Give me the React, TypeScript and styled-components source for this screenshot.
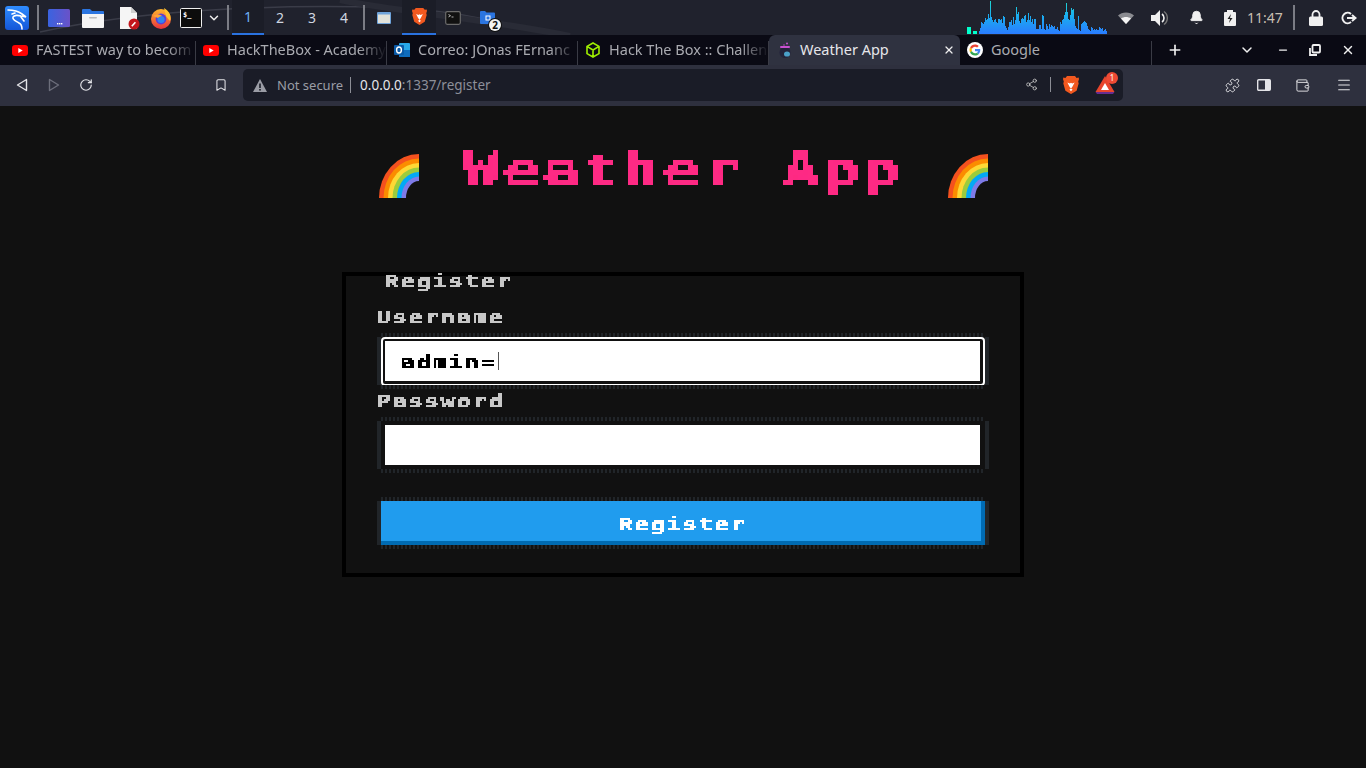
import React from "react";
import styled, { createGlobalStyle, css } from "styled-components";
import { Bell, Bookmark, ChevronDown, Menu, Minus, Plus, Puzzle, RotateCw, Share2, Wallet, X } from "lucide-react";

const Global = createGlobalStyle`
  html, body { margin: 0; padding: 0; height: 100%; background: #111; overflow: hidden; }
  * { box-sizing: border-box; }
`;

const Shell = styled.div`
  width: 1366px; height: 768px; display: flex; flex-direction: column; overflow: hidden;
  font-family: "Noto Sans", sans-serif;
`;

/* ---------- desktop panel ---------- */
const Panel = styled.header`
  position: relative; height: 35px; flex: none; display: flex; align-items: center;
  background: #20222d; padding-left: 3px; color: #d8d8d8; overflow: hidden;
`;
const Swoosh = styled.svg`position: absolute; left: 0; top: 0; pointer-events: none;`;
const PanelGroup = styled.div`position: relative; display: flex; align-items: center; height: 35px;`;
const PanelSep = styled.div<{ $l?: number; $r?: number }>`
  position: relative; width: 2px; height: 25px; background: #7b7d85; flex: none;
  margin: 0 ${(p) => p.$r ?? 0}px 0 ${(p) => p.$l ?? 0}px;
`;
const Launcher = styled.div<{ $w: number }>`
  width: ${(p) => p.$w}px; height: 35px; display: flex; align-items: center; justify-content: center; flex: none;
`;
const Workspace = styled.div<{ $on?: boolean }>`
  width: 32px; height: 35px; display: flex; align-items: center; justify-content: center; flex: none;
  font-size: 14px; color: ${(p) => (p.$on ? "#6fb0f5" : "#cfd6e0")};
  ${(p) => p.$on && css`background: #1b1d27; border-bottom: 2px solid #2a72e0;`}
`;
const TaskItem = styled.div<{ $w: number; $on?: boolean }>`
  position: relative; width: ${(p) => p.$w}px; height: 35px; display: flex; align-items: center; justify-content: center; flex: none;
  ${(p) => p.$on && css`background: #1b1d27; border-bottom: 2px solid #2a72e0;`}
`;
const Badge = styled.span`
  position: absolute; left: 19px; top: 19px; width: 12px; height: 12px; border-radius: 50%;
  background: #f2f2f2; color: #111; font-size: 10px; font-weight: 700; line-height: 12px; text-align: center;
  box-shadow: 0 0 0 1px #111;
`;
const Tray = styled.div`
  position: relative; margin-left: auto; display: flex; align-items: center; height: 35px; padding-right: 4px;
`;
const Visual = styled.svg`display: block; margin-right: 4px;`;
const TrayIcon = styled.div<{ $w: number }>`
  width: ${(p) => p.$w}px; display: flex; align-items: center; justify-content: center; flex: none; color: #ececec;
`;
const Clock = styled.span`font-size: 14px; color: #c9bfb0; width: 34px; text-align: center; flex: none; white-space: nowrap;`;

/* ---------- tab strip ---------- */
const Strip = styled.div`
  height: 30px; flex: none; display: flex; align-items: stretch; background: #0a0a14; padding-left: 5px; color: #a9aab0;
`;
const Tab = styled.div<{ $active?: boolean; $sep?: boolean }>`
  position: relative; width: 191px; flex: none; display: flex; align-items: center; gap: 8px; padding-left: 7px;
  font-size: 14.5px; white-space: nowrap; overflow: hidden;
  ${(p) => p.$sep && css`&::before { content: ""; position: absolute; right: 0; top: 6px; bottom: 0; width: 1px; background: #3a3b45; }`}
  ${(p) => p.$active && css`background: #2f3240; color: #e6e6ea; border-radius: 6px 6px 0 0; padding-left: 9px;`}
`;
const TabTitle = styled.span<{ $fade?: boolean }>`
  flex: 1; min-width: 0; line-height: 28px; margin-top: -2px;
  ${(p) => p.$fade && css`-webkit-mask-image: linear-gradient(to right, #000 82%, transparent 100%);`}
`;
const TabClose = styled.span`display: flex; color: #f0f0f0; margin-right: 5px;`;
const StripRule = styled.div`width: 1px; margin: 6px 0 0 0; background: #3a3b45; flex: none;`;
const StripBtn = styled.div<{ $w: number; $ml?: number }>`
  width: ${(p) => p.$w}px; margin-left: ${(p) => p.$ml ?? 0}px; display: flex; align-items: center; justify-content: center; color: #f0f0f0; flex: none;
`;

/* ---------- toolbar ---------- */
const Toolbar = styled.div`
  height: 41px; flex: none; display: flex; align-items: center; background: #2e303e; padding: 0 0 1px 6px;
  color: #e4e4e8;
`;
const ToolBtn = styled.div<{ $w: number; $dim?: boolean; $ml?: number }>`
  width: ${(p) => p.$w}px; margin-left: ${(p) => p.$ml ?? 0}px; display: flex; align-items: center; justify-content: center; flex: none;
  color: ${(p) => (p.$dim ? "#6c6e7b" : "#e4e4e8")};
`;
const BookmarkSlot = styled.div`
  width: 141px; padding-right: 15px; display: flex; justify-content: flex-end; flex: none; color: #e4e4e8;
`;
const Omnibox = styled.div`
  width: 880px; height: 32px; flex: none; background: #1a1c27; border-radius: 5px; display: flex; align-items: center;
  padding: 0 8px 0 10px; font-size: 13px; color: #8d8f99;
`;
const Warn = styled.div`display: flex; margin-right: 10px;`;
const Notsecure = styled.span`color: #9a9ca5; font-size: 13px;`;
const OmniRule = styled.div<{ $h?: number; $l?: number; $r?: number }>`
  width: 1px; height: ${(p) => p.$h ?? 16}px; background: #8c8e96; flex: none;
  margin: 0 ${(p) => p.$r ?? 9}px 0 ${(p) => p.$l ?? 7}px;
`;
const Host = styled.span`color: #e6e6ea; font-size: 13.5px;`;
const Path = styled.span`color: #8d8f99; font-size: 13.5px;`;
const OmniTail = styled.div`margin-left: auto; display: flex; align-items: center;`;
const RatWrap = styled.div`position: relative; width: 20px; height: 18px; margin-left: 16px;`;
const RatBadge = styled.span`
  position: absolute; left: 11px; top: -4px; width: 12px; height: 12px; border-radius: 50%;
  background: #ee4a34; color: #fff; font-size: 8px; line-height: 12px; text-align: center;
`;

/* ---------- page ---------- */
const Page = styled.main`
  flex: 1; background: #111; display: flex; flex-direction: column; align-items: center; padding-top: 39px;
`;
const Heading = styled.h1`
  margin: 0; height: 55px; display: flex; align-items: flex-start; font-weight: 400; color: #fe2a84;
`;
const Rainbow = styled.svg`display: block; flex: none; margin-top: 8px;`;
const TitleText = styled.div`margin: 5px 44px 0 44px; flex: none;`;

const Cell = styled.span<{ $n: number; $size: number; $filter: string }>`
  display: inline-block; flex: none; width: ${(p) => p.$n * p.$size}px; height: ${(p) => p.$size + 2}px;
  filter: url(#${(p) => p.$filter}); line-height: ${(p) => p.$size}px; white-space: pre; text-align: left;
`;
const Glyphs = styled.span<{ $size: number }>`
  display: inline-block; transform: scaleX(1.3); transform-origin: 0 0;
  font-family: "DejaVu Sans Mono", monospace; font-weight: 700;
  font-size: ${(p) => p.$size * 1.15}px; letter-spacing: ${(p) => p.$size * 0.0767}px;
  -webkit-text-stroke: ${(p) => p.$size * 0.012}px currentColor;
`;
const PixelText: React.FC<{ text: string; size: number; filter: string }> = ({ text, size, filter }) => (
  <Cell $n={text.length} $size={size} $filter={filter}>
    <Glyphs $size={size}>{text}</Glyphs>
  </Cell>
);

const Form = styled.form`
  position: relative; width: 682px; height: 305px; margin-top: 72px; border: 4px solid #000; background: #111;
  padding: 31px 0 0 31px; color: #c8c8c8;
`;
const Legend = styled.div`
  position: absolute; left: 38px; top: -6px; height: 18px; color: #c8c8c8;
`;
const Field = styled.div`display: flex; flex-direction: column;`;
const Label = styled.label`display: block; height: 25px; margin: -1px 0 2px -1px; color: #c8c8c8;`;

const Frame = styled.div<{ $h?: number }>`
  position: relative; width: 612px; height: ${(p) => p.$h ?? 56}px;
  &::before {
    content: ""; position: absolute; left: 4px; right: 4px; top: 0; height: 4px;
    background: repeating-linear-gradient(90deg, #212529 0 2px, #111 2px 4px);
  }
  &::after {
    content: ""; position: absolute; left: 4px; right: 4px; bottom: 0; height: 4px;
    background: repeating-linear-gradient(90deg, #212529 0 2px, #111 2px 4px);
    box-shadow: 0 3px 0 -2px #1b1d20;
  }
`;
const SideBar = styled.i<{ $right?: boolean }>`
  position: absolute; top: 4px; bottom: 4px; width: 4px; background: #212529;
  ${(p) => (p.$right ? "right: 0;" : "left: 0;")}
`;
const Focus = styled.div`
  position: absolute; left: 4px; right: 4px; top: 4px; bottom: 3px; border: 2px solid #fff; border-radius: 4px; background: #111;
  padding: 2px 3px 3px 2px;
`;
const Plain = styled.div`
  position: absolute; left: 4px; right: 4px; top: 4px; bottom: 4px; background: #111; padding: 4px 5px 4px 4px;
`;
const InputBox = styled.div`
  width: 100%; height: 100%; background: #fff; color: #000; display: flex; align-items: center; padding: 3px 0 0 15px;
`;
const Caret = styled.i`display: block; width: 1px; height: 18px; background: #555; margin: -3px 0 0 2px;`;
const Button = styled.button`
  position: absolute; left: 4px; right: 4px; top: 4px; bottom: 4px; border: 0; padding: 3px 3px 0 0; margin: 0;
  background: #209cee; color: #fff; box-shadow: inset -4px -4px #006bb3;
  display: flex; align-items: center; justify-content: center;
`;
const Spacer = styled.div<{ $h: number }>`height: ${(p) => p.$h}px;`;

/* ---------- drawings ---------- */
const KaliIcon = () => (
  <svg width="26" height="26" viewBox="0 0 26 26">
    <defs>
      <linearGradient id="kb" x1="0" y1="0" x2="0" y2="1"><stop offset="0" stopColor="#2f8cff" /><stop offset="1" stopColor="#1456d8" /></linearGradient>
    </defs>
    <rect x="1" y="1" width="24" height="24" rx="3" fill="url(#kb)" />
    <path d="M4 5c5 0 10 1 14 4l4 3-5-1c-3-1-7-1-8 1-1 3 3 4 6 6 2 1 3 3 3 6M11 8l-3 1M17 12l3 4" fill="none" stroke="#fff" strokeWidth="1.6" strokeLinecap="round" />
  </svg>
);
const DesktopIcon = () => (
  <svg width="22" height="18" viewBox="0 0 22 18">
    <defs><linearGradient id="dg" x1="0" y1="0" x2="1" y2="0"><stop offset="0" stopColor="#3a63e0" /><stop offset="1" stopColor="#6a52c8" /></linearGradient></defs>
    <rect width="22" height="18" rx="1.5" fill="url(#dg)" />
    <rect x="9" y="14" width="1.4" height="1.4" fill="#fff" /><rect x="11" y="14" width="1.4" height="1.4" fill="#fff" /><rect x="13" y="14" width="1.4" height="1.4" fill="#fff" />
  </svg>
);
const FilesIcon = () => (
  <svg width="22" height="20" viewBox="0 0 22 20">
    <path d="M0 2a1 1 0 0 1 1-1h7l2 2h11a1 1 0 0 1 1 1v3H0z" fill="#2b75e0" />
    <path d="M0 6h22v13a1 1 0 0 1-1 1H1a1 1 0 0 1-1-1z" fill="#f4f4f4" />
    <rect x="7" y="9" width="8" height="1.6" rx=".8" fill="#bcbcbc" />
  </svg>
);
const NoteIcon = () => (
  <svg width="22" height="24" viewBox="0 0 22 24">
    <path d="M2 1h11l6 6v16H2z" fill="#f5f5f5" /><path d="M13 1l6 6h-6z" fill="#cfcfcf" />
    <circle cx="16" cy="18" r="5.5" fill="#c4161c" /><path d="M13.8 20.2l3.6-4" stroke="#fff" strokeWidth="1.6" />
  </svg>
);
const FoxIcon = () => (
  <svg width="22" height="22" viewBox="0 0 22 22">
    <defs><linearGradient id="ff" x1="0" y1="0" x2="0" y2="1"><stop offset="0" stopColor="#ffb52e" /><stop offset="1" stopColor="#e8323c" /></linearGradient></defs>
    <circle cx="11" cy="12" r="10" fill="url(#ff)" />
    <path d="M14 1c5 3 8 8 6 13-2-2-3-4-4-5z" fill="#ffc22f" />
    <circle cx="11" cy="12" r="5.4" fill="#5b3fd6" /><circle cx="11" cy="12.5" r="3.6" fill="#2f86f0" />
    <path d="M3 9c3-2 7-2 9 0-2 0-3 1-4 2z" fill="#ffa436" />
  </svg>
);
const TermIcon = () => (
  <svg width="22" height="20" viewBox="0 0 22 20">
    <rect x=".5" y=".5" width="21" height="19" rx="1" fill="#0c0c0c" stroke="#f0f0f0" />
    <text x="3" y="9" fill="#fff" fontSize="7" fontFamily="DejaVu Sans Mono" fontWeight="700">$_</text>
  </svg>
);
const WinIcon = () => (
  <svg width="14" height="12" viewBox="0 0 14 12"><rect width="14" height="12" rx="1" fill="#6fa3da" /><rect x="1" y="2.5" width="12" height="8.5" fill="#e2e2da" /></svg>
);
const BraveIcon = ({ s = 15 }: { s?: number }) => (
  <svg width={s} height={s * 1.13} viewBox="0 0 20 22.6">
    <path d="M5 0h10l2 2.4L19.6 2l.4 2-1 3 .6 2.4-2.6 9L10 22.6 3 18.4l-2.6-9L1 7 0 4l.4-2L3 2.4z" fill="#f1581f" />
    <path d="M5.5 8l3 1.5L10 8.5l1.5 1 3-1.5-2.6 5L10 16l-2-3z" fill="#fff" />
    <path d="M8 17l2-1 2 1-2 2z" fill="#fff" />
  </svg>
);
const SmallTerm = () => (
  <svg width="16" height="14" viewBox="0 0 16 14"><rect x=".7" y=".7" width="14.6" height="12.6" rx="1.5" fill="#111" stroke="#6c6c6c" strokeWidth="1.2" /><path d="M3.5 3.5l2 1.2-2 1.2M6.5 6h2" stroke="#ddd" strokeWidth=".8" fill="none" /></svg>
);
const SmallFolder = () => (
  <svg width="15" height="13" viewBox="0 0 15 13"><path d="M0 1a1 1 0 0 1 1-1h4l1.5 1.5H14a1 1 0 0 1 1 1V12a1 1 0 0 1-1 1H1a1 1 0 0 1-1-1z" fill="#2b75e0" /><rect x="6" y="5" width="4" height="4" fill="none" stroke="#fff" /></svg>
);

const vis = [3,6,12,11,10,12,16,14,15,20,16,33,17,14,12,14,15,12,11,15,15,14,15,11,18,17,8,6,4,7,12,12,14,9,17,10,14,27,20,22,13,11,15,16,15,18,19,12,14,21,14,18,12,15,10,15,15,5,5,5,9,9,5,19,18,5,4,10,8,5,10,7,9,8,7,8,5,5,7,4,3,12,10,14,15,19,22,31,22,15,14,19,26,24,25,15,8,6,5,18,4,3,10,11,12,13,12,11,8,5,4,3,7,6,4,5,4,5,4,4,7,6,5,6,3,4,5,3];
const Visualizer = () => (
  <Visual width="140" height="35" viewBox="0 0 140 35">
    <defs>
      <linearGradient id="vg" gradientUnits="userSpaceOnUse" x1="0" y1="1" x2="0" y2="34">
        <stop offset="0" stopColor="#1fd8d0" /><stop offset=".45" stopColor="#1aaef0" /><stop offset="1" stopColor="#2a7cff" />
      </linearGradient>
    </defs>
    <rect x="0" y="27" width="4" height="7" fill="#00ffcc" />
    <rect x="6" y="31" width="4" height="3" fill="#00ffcc" />
    {vis.map((h, i) => <rect key={i} x={12 + i} y={34 - h} width="1" height={h} fill="url(#vg)" />)}
  </Visual>
);
const Wifi = () => (
  <svg width="16" height="12" viewBox="0 0 16 12"><path d="M0 3.5C4-.5 12-.5 16 3.5L8 12z" fill="#8a8b90" /><path d="M3 6.5c3-2 7-2 10 0L8 12z" fill="#f4f4f4" /></svg>
);
const Speaker = () => (
  <svg width="18" height="16" viewBox="0 0 18 16"><path d="M0 5h4l5-5v16l-5-5H0z" fill="#f0f0f0" /><path d="M11 4a5 5 0 0 1 0 8" fill="none" stroke="#f0f0f0" strokeWidth="1.6" /><path d="M13 1.5a8 8 0 0 1 0 13" fill="none" stroke="#777" strokeWidth="1.4" /></svg>
);
const Battery = () => (
  <svg width="12" height="16" viewBox="0 0 12 16"><path d="M3 2V0h6v2h2a1 1 0 0 1 1 1v12a1 1 0 0 1-1 1H1a1 1 0 0 1-1-1V3a1 1 0 0 1 1-1z" fill="#f0f0f0" /><path d="M7 4L3.5 9H6l-1 4 3.5-5H6z" fill="#222" /></svg>
);
const LockIcon = () => (
  <svg width="14" height="16" viewBox="0 0 14 16"><path d="M3.5 7V4.5a3.5 3.5 0 0 1 7 0V7" fill="none" stroke="#f0f0f0" strokeWidth="1.8" /><rect y="6.5" width="14" height="9.5" rx="1.5" fill="#f0f0f0" /></svg>
);
const Logout = () => (
  <svg width="16" height="14" viewBox="0 0 16 14"><path d="M10 3a5.2 5.2 0 1 0 0 8" fill="none" stroke="#f0f0f0" strokeWidth="2" /><path d="M6 7h7M11 4l3.5 3-3.5 3" fill="none" stroke="#f0f0f0" strokeWidth="2" /></svg>
);
const YouTube = () => (
  <svg width="16" height="11" viewBox="0 0 16 11"><rect width="16" height="11" rx="3" fill="#f00" /><path d="M6.3 3l4.4 2.5L6.3 8z" fill="#fff" /></svg>
);
const Outlook = () => (
  <svg width="16" height="16" viewBox="0 0 16 16"><rect x="5" y="1" width="11" height="14" rx="1" fill="#28a8ea" /><rect x="5" y="8" width="11" height="7" fill="#0f6cbd" /><rect x="0" y="3" width="10" height="10" rx="1" fill="#0a5aa8" /><ellipse cx="5" cy="8" rx="2.4" ry="3" fill="none" stroke="#fff" strokeWidth="1.4" /></svg>
);
const Htb = () => (
  <svg width="16" height="16" viewBox="0 0 16 16"><path d="M8 1l6 3.4v7.2L8 15l-6-3.4V4.4zM2 4.4L8 8l6-3.6M8 8v7" fill="none" stroke="#9fef00" strokeWidth="1.6" /></svg>
);
const Potion = () => (
  <svg width="14" height="16" viewBox="0 0 14 16"><circle cx="7" cy="10.5" r="5.5" fill="#23233a" /><ellipse cx="9" cy="12" rx="3" ry="2.6" fill="#4aa0c8" /><rect x="2" y="4" width="10" height="2" rx="1" fill="#c850d0" /><circle cx="9" cy="1.5" r="1" fill="#c850d0" /><circle cx="6" cy="3" r=".7" fill="#c850d0" /></svg>
);
const GoogleG = () => (
  <svg width="16" height="16" viewBox="0 0 48 48">
    <circle cx="24" cy="24" r="24" fill="#fff" />
    <g transform="translate(7.5 7.5) scale(.6875)">
      <path fill="#EA4335" d="M24 9.5c3.5 0 6.7 1.2 9.2 3.6l6.9-6.9C35.9 2.4 30.5 0 24 0 14.6 0 6.5 5.4 2.6 13.2l8 6.2C12.5 13.6 17.8 9.5 24 9.5z" />
      <path fill="#4285F4" d="M46.9 24.5c0-1.6-.1-3.1-.4-4.5H24v9h12.9c-.6 3-2.2 5.5-4.7 7.2l7.7 6c4.5-4.2 7-10.3 7-17.7z" />
      <path fill="#FBBC05" d="M10.5 28.6c-.5-1.4-.8-3-.8-4.6s.3-3.2.8-4.6l-8-6.2C.9 16.5 0 20.1 0 24s.9 7.5 2.6 10.8z" />
      <path fill="#34A853" d="M24 48c6.5 0 11.9-2.1 15.9-5.8l-7.7-6c-2.2 1.4-4.9 2.3-8.2 2.3-6.2 0-11.5-4.2-13.4-9.8l-8 6.2C6.5 42.6 14.6 48 24 48z" />
    </g>
  </svg>
);
const TriLeft = () => (
  <svg width="12" height="14" viewBox="0 0 12 14"><path d="M10.5 1.5v11L1.5 7z" fill="none" stroke="currentColor" strokeWidth="1.4" strokeLinejoin="round" /></svg>
);
const TriRight = () => (
  <svg width="12" height="14" viewBox="0 0 12 14"><path d="M1.5 1.5v11l9-5.5z" fill="none" stroke="currentColor" strokeWidth="1.4" strokeLinejoin="round" /></svg>
);
const WarnIcon = () => (
  <svg width="14" height="13" viewBox="0 0 14 13"><path d="M7 0l7 13H0z" fill="#9a9ca5" /><rect x="6.2" y="4.5" width="1.6" height="4.5" fill="#1a1c27" /><rect x="6.2" y="10" width="1.6" height="1.6" fill="#1a1c27" /></svg>
);
const RatIcon = () => (
  <svg width="20" height="18" viewBox="0 0 20 18"><path d="M10 0l9.5 16H.5z" fill="#e8452c" /><path d="M.5 16h19L18 18H2z" fill="#662d91" /><path d="M10 7l4 7H6z" fill="#fff" /></svg>
);
const SidePanel = () => (
  <svg width="14" height="12" viewBox="0 0 14 12"><rect x=".7" y=".7" width="12.6" height="10.6" rx="1" fill="none" stroke="currentColor" strokeWidth="1.4" /><rect x="8" y="1" width="5" height="10" fill="currentColor" /></svg>
);
const Restore = () => (
  <svg width="12" height="12" viewBox="0 0 12 12"><rect x="3.5" y="1" width="7.5" height="7.5" rx="1" fill="none" stroke="currentColor" strokeWidth="1.8" /><path d="M1 4v7h7" fill="none" stroke="currentColor" strokeWidth="1.8" /></svg>
);
const RainbowIcon = () => {
  const bands: [string, number, number][] = [
    ["#f4511e", 40, 44], ["#fb8c00", 35.5, 39.5], ["#fdd835", 31, 35], ["#9ccc3c", 26.5, 30.5],
    ["#03a9f4", 22, 26], ["#7e7be8", 17.5, 21.5], ["#111111", 13, 17],
  ];
  return (
    <Rainbow width="41" height="45" viewBox="0 0 41 45">
      {bands.map(([c, rx, ry]) => (
        <path key={c} d={`M41 45H${41 - rx}A${rx} ${ry} 0 0 1 41 ${45 - ry}Z`} fill={c} />
      ))}
    </Rainbow>
  );
};

const tabs = [
  { icon: <YouTube />, title: "FASTEST way to becom" },
  { icon: <YouTube />, title: "HackTheBox - Academy" },
  { icon: <Outlook />, title: "Correo: JOnas FErnanc" },
  { icon: <Htb />, title: "Hack The Box :: Challen" },
];

export default function App() {
  return (
    <>
      <Global />
      <svg width="0" height="0" style={{ position: "absolute" }} aria-hidden="true">
        <defs>
          <filter id="px5" x="-2%" y="-10%" width="104%" height="120%" colorInterpolationFilters="sRGB">
            <feFlood x="2" y="2" width="1" height="1" floodColor="#000" />
            <feComposite width="5" height="5" />
            <feTile result="grid" />
            <feComposite in="SourceGraphic" in2="grid" operator="in" />
            <feMorphology operator="dilate" radius="2" result="d" />
            <feComponentTransfer in="d"><feFuncA type="discrete" tableValues="0 1 1" /></feComponentTransfer>
          </filter>
          <filter id="px2" x="-2%" y="-10%" width="104%" height="120%" colorInterpolationFilters="sRGB">
            <feFlood x="0" y="0" width="1" height="1" floodColor="#000" />
            <feComposite width="2" height="2" />
            <feTile result="grid" />
            <feComposite in="SourceGraphic" in2="grid" operator="in" result="s" />
            <feOffset in="s" dx="1" dy="0" result="a" />
            <feOffset in="s" dx="0" dy="1" result="b" />
            <feOffset in="s" dx="1" dy="1" result="c" />
            <feMerge result="m"><feMergeNode in="s" /><feMergeNode in="a" /><feMergeNode in="b" /><feMergeNode in="c" /></feMerge>
            <feComponentTransfer in="m"><feFuncA type="discrete" tableValues="0 1 1" /></feComponentTransfer>
          </filter>
        </defs>
      </svg>
      <Shell>
        <Panel>
          <Swoosh width="1366" height="35" viewBox="0 0 1366 35">
            <path d="M40 32C150 8 290 4 400 8c70 4 110 18 165 28" fill="none" stroke="#3a3c48" strokeWidth="1.5" />
            <path d="M340 0c60 12 140 18 230 36" fill="none" stroke="#292b36" strokeWidth="6" />
          </Swoosh>
          <PanelGroup>
            <Launcher $w={28}><KaliIcon /></Launcher>
            <PanelSep $l={6} />
            <Launcher $w={40}><DesktopIcon /></Launcher>
            <Launcher $w={28}><FilesIcon /></Launcher>
            <Launcher $w={43}><NoteIcon /></Launcher>
            <Launcher $w={22}><FoxIcon /></Launcher>
            <Launcher $w={38}><TermIcon /></Launcher>
            <Launcher $w={8}><ChevronDown size={14} color="#eee" strokeWidth={2.5} style={{ flex: "none" }} /></Launcher>
            <PanelSep $l={9} $r={3} />
            <Workspace $on>1</Workspace>
            <Workspace>2</Workspace>
            <Workspace>3</Workspace>
            <Workspace>4</Workspace>
            <PanelSep $l={3} />
            <TaskItem $w={37}><WinIcon /></TaskItem>
            <TaskItem $w={34} $on><BraveIcon /></TaskItem>
            <TaskItem $w={34}><SmallTerm /></TaskItem>
            <TaskItem $w={34}><SmallFolder /><Badge>2</Badge></TaskItem>
          </PanelGroup>
          <Tray>
            <Visualizer />
            <TrayIcon $w={30}><Wifi /></TrayIcon>
            <TrayIcon $w={38}><Speaker /></TrayIcon>
            <TrayIcon $w={34}><Bell size={15} fill="#f0f0f0" strokeWidth={1.5} /></TrayIcon>
            <TrayIcon $w={34}><Battery /></TrayIcon>
            <Clock>11:47</Clock>
            <PanelSep $l={12} />
            <TrayIcon $w={41}><LockIcon /></TrayIcon>
            <TrayIcon $w={26}><Logout /></TrayIcon>
          </Tray>
        </Panel>

        <Strip>
          {tabs.map((t, i) => (
            <Tab key={i} $sep>
              {t.icon}
              <TabTitle $fade>{t.title}</TabTitle>
            </Tab>
          ))}
          <Tab $active>
            <Potion />
            <TabTitle>Weather App</TabTitle>
            <TabClose><X size={12} strokeWidth={2.5} /></TabClose>
          </Tab>
          <Tab>
            <GoogleG />
            <TabTitle>Google</TabTitle>
          </Tab>
          <StripRule />
          <StripBtn $w={46}><Plus size={16} strokeWidth={2.5} /></StripBtn>
          <StripBtn $w={40} $ml={29}><ChevronDown size={16} strokeWidth={2.2} /></StripBtn>
          <StripBtn $w={32}><Minus size={12} strokeWidth={2.5} /></StripBtn>
          <StripBtn $w={32}><Restore /></StripBtn>
          <StripBtn $w={34}><X size={14} strokeWidth={2.5} /></StripBtn>
        </Strip>

        <Toolbar>
          <ToolBtn $w={32}><TriLeft /></ToolBtn>
          <ToolBtn $w={32} $dim><TriRight /></ToolBtn>
          <ToolBtn $w={32}><RotateCw size={14} strokeWidth={2} /></ToolBtn>
          <BookmarkSlot><Bookmark size={14} strokeWidth={1.8} /></BookmarkSlot>
          <Omnibox>
            <Warn><WarnIcon /></Warn>
            <Notsecure>Not secure</Notsecure>
            <OmniRule />
            <Host>0.0.0.0</Host>
            <Path>:1337/register</Path>
            <OmniTail>
              <Share2 size={13} strokeWidth={1.5} color="#c8c8c8" />
              <OmniRule $h={15} $l={12} $r={12} />
              <BraveIcon s={16} />
              <RatWrap><RatIcon /><RatBadge>1</RatBadge></RatWrap>
            </OmniTail>
          </Omnibox>
          <ToolBtn $w={32} $ml={93}><Puzzle size={15} strokeWidth={1.6} /></ToolBtn>
          <ToolBtn $w={32}><SidePanel /></ToolBtn>
          <ToolBtn $w={44}><Wallet size={15} strokeWidth={1.5} /></ToolBtn>
          <ToolBtn $w={40}><Menu size={16} strokeWidth={1.6} /></ToolBtn>
        </Toolbar>

        <Page>
          <Heading>
            <RainbowIcon />
            <TitleText><PixelText text="Weather App" size={40} filter="px5" /></TitleText>
            <RainbowIcon />
          </Heading>
          <Form onSubmit={(e) => e.preventDefault()}>
            <Legend><PixelText text="Register" size={16} filter="px2" /></Legend>
            <Field>
              <Label><PixelText text="Username" size={16} filter="px2" /></Label>
              <Frame>
                <SideBar /><SideBar $right />
                <Focus><InputBox><PixelText text="admin=" size={16} filter="px2" /><Caret /></InputBox></Focus>
              </Frame>
            </Field>
            <Spacer $h={2} />
            <Field>
              <Label><PixelText text="Password" size={16} filter="px2" /></Label>
              <Frame>
                <SideBar /><SideBar $right />
                <Plain><InputBox /></Plain>
              </Frame>
            </Field>
            <Spacer $h={24} />
            <Frame $h={52}>
              <SideBar /><SideBar $right />
              <Button type="button"><PixelText text="Register" size={16} filter="px2" /></Button>
            </Frame>
          </Form>
        </Page>
      </Shell>
    </>
  );
}
